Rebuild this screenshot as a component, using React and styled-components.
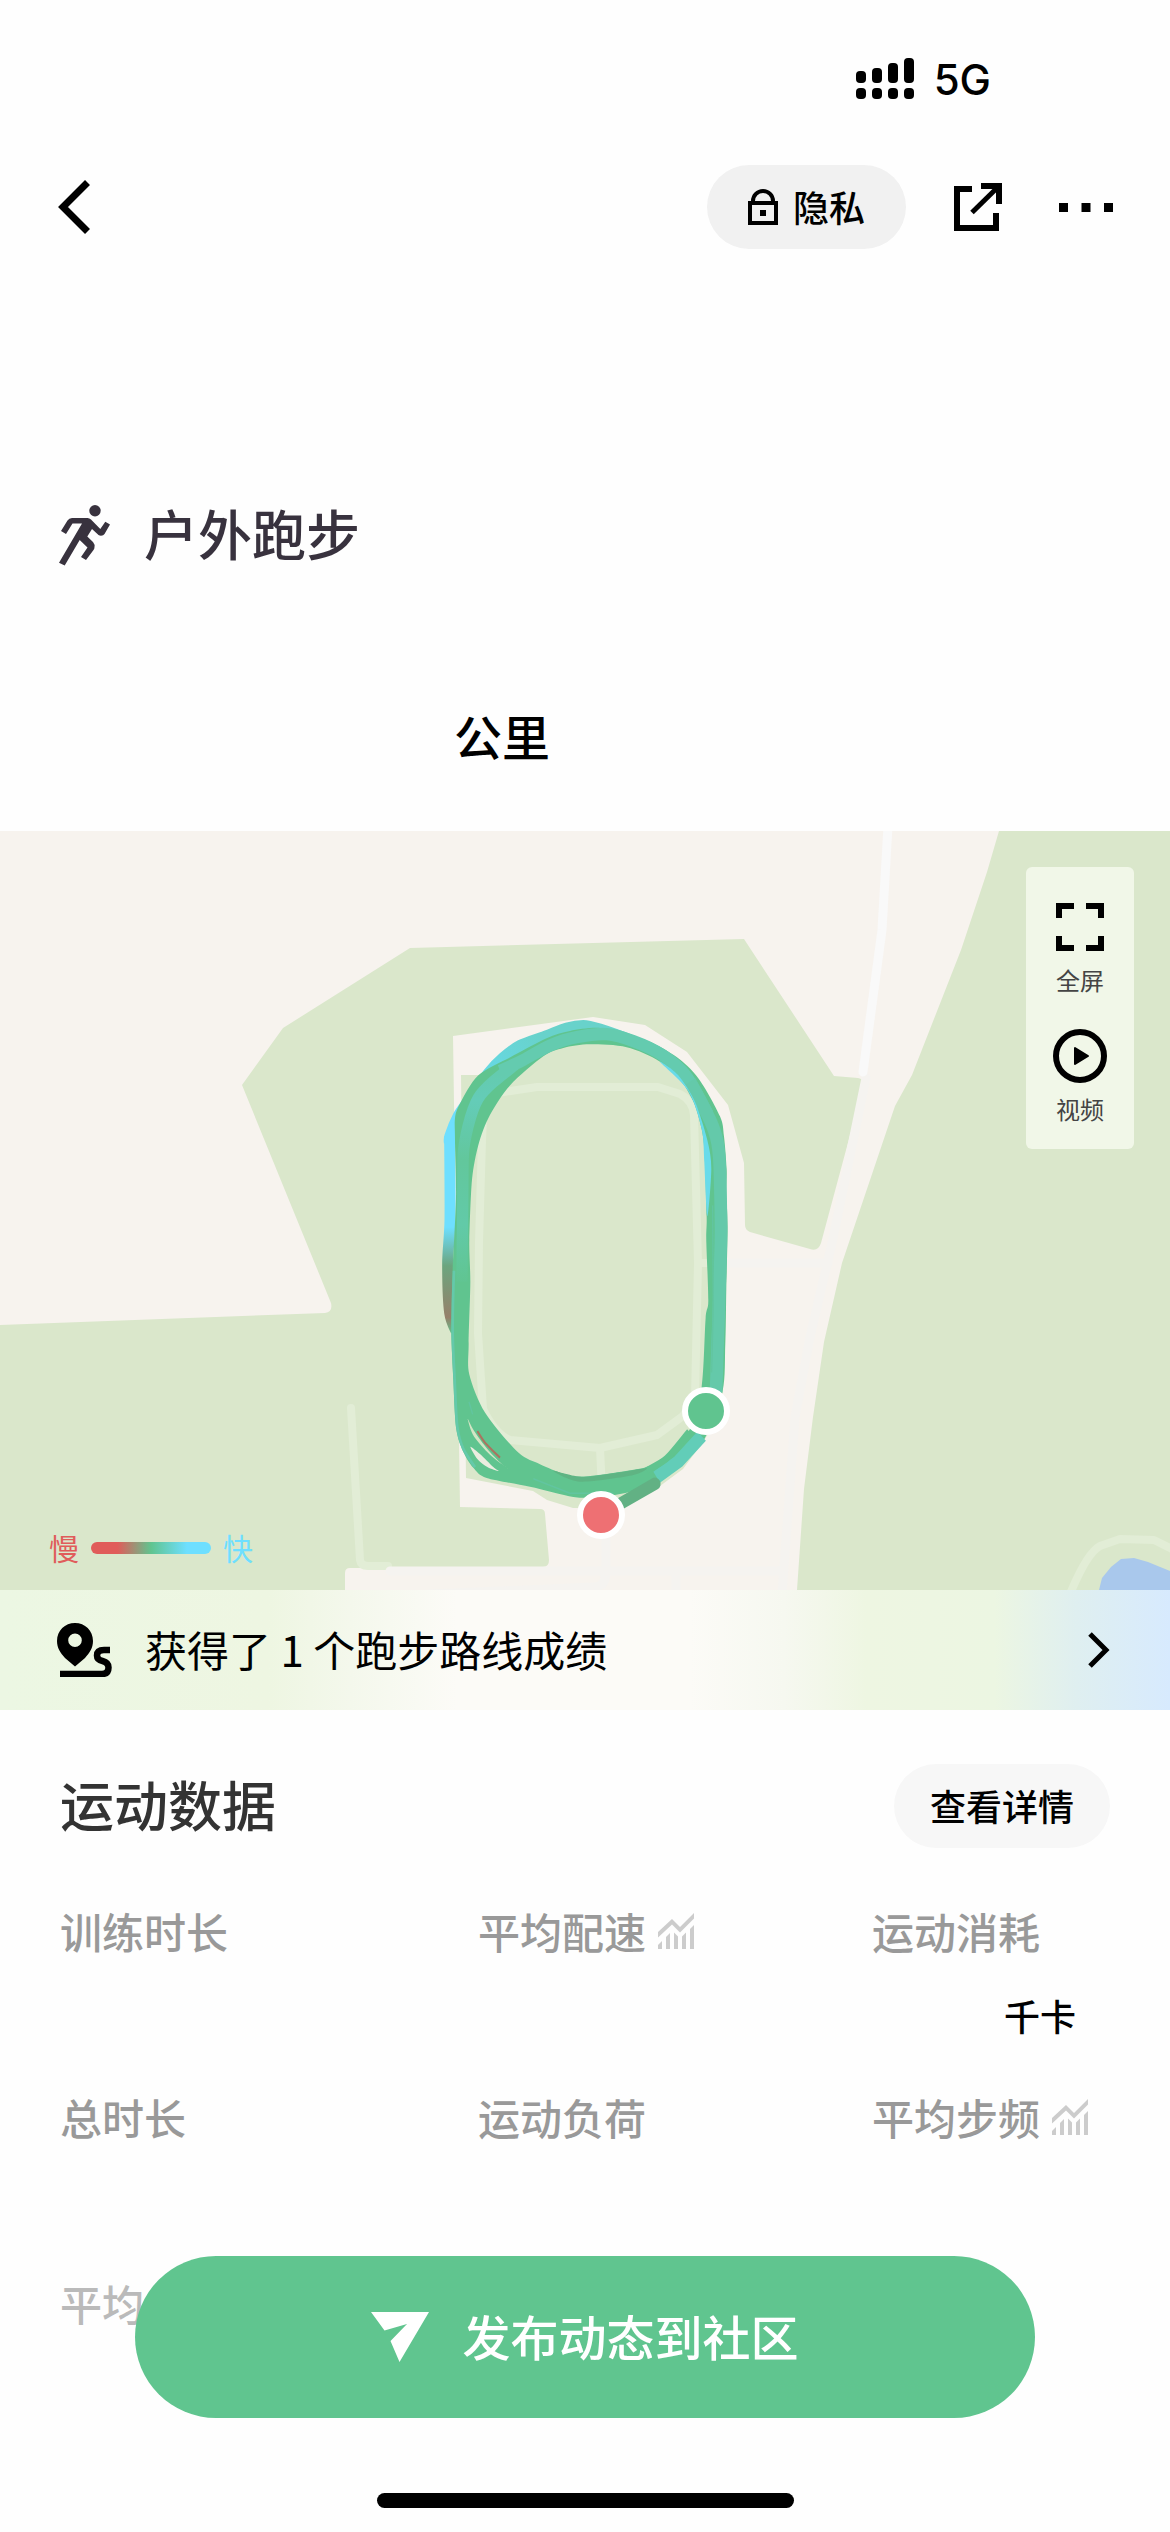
import React from "react";
import styled, { createGlobalStyle } from "styled-components";

const GlobalStyle = createGlobalStyle`
  *, *::before, *::after { box-sizing: border-box; }
  body {
    margin: 0;
    background: #fefefe;
    color: #000;
    font-family: Inter, "Noto Sans CJK SC", sans-serif;
  }
  button {
    border: 0;
    padding: 0;
    background: none;
    color: inherit;
    font: inherit;
    cursor: pointer;
  }
  h1, h2, p, dl, dt, dd { margin: 0; font-weight: inherit; }
  svg { display: block; flex: none; }
`;

const Page = styled.div`
  min-height: 100vh;
  font-family: "Noto Sans CJK SC", sans-serif;
`;

const StatusBar = styled.div`
  display: flex;
  justify-content: flex-end;
  align-items: center;
  gap: 20px;
  padding: 54px 179px 63px 60px;
  font: 500 42px/48px Inter, sans-serif;
`;

const Network = styled.span`
  padding-top: 4px;
  line-height: 44px;
`;

const Header = styled.header`
  display: flex;
  align-items: center;
  justify-content: space-between;
  height: 84px;
  padding: 0 57px;
`;

const HeaderActions = styled.div`
  display: flex;
  align-items: center;
`;

const IconButton = styled.button`
  display: flex;
  align-items: center;
  justify-content: center;
  height: 84px;
  margin-left: ${(p) => p.$gap || 0}px;
`;

const Pill = styled.button`
  display: flex;
  align-items: center;
  justify-content: center;
  gap: 15px;
  height: 84px;
  padding: 0 ${(p) => p.$pad}px;
  border-radius: 42px;
  background: ${(p) => p.$tone};
  font-size: 36px;
  line-height: 48px;
  font-weight: 500;
`;

const PillText = styled.span`
  padding-bottom: 2px;
`;

const Activity = styled.div`
  display: flex;
  align-items: center;
  gap: 33px;
  margin-top: 246px;
  padding: 0 59px;
  color: #38323e;
`;

const Title = styled.h2`
  padding-bottom: 4px;
  color: ${(p) => p.$tone};
  font-size: 54px;
  line-height: 76px;
  font-weight: 500;
`;

const Distance = styled.p`
  margin: 124px 0 60px;
  padding-left: 454px;
  font-size: 48px;
  line-height: 72px;
  font-weight: 500;
`;

const MapArea = styled.section`
  position: relative;
`;

const MapDrawing = styled.svg`
  width: 100%;
  height: auto;
`;

const MapTools = styled.div`
  position: absolute;
  top: 36px;
  right: 36px;
  display: flex;
  flex-direction: column;
  gap: 30px;
  width: 108px;
  padding: 33px 0 21px;
  border-radius: 6px;
  background: #f1f7e8;
`;

const MapTool = styled.button`
  display: flex;
  flex-direction: column;
  align-items: center;
  gap: 6px;
  color: #444;
  font-size: 24px;
  line-height: 39px;
`;

const Legend = styled.div`
  position: absolute;
  left: 49px;
  bottom: 20px;
  display: flex;
  align-items: center;
  gap: 12px;
  font-size: 30px;
  line-height: 42px;
`;

const LegendText = styled.span`
  padding-bottom: 2px;
  color: ${(p) => p.$tone};
`;

const LegendBar = styled.span`
  width: 120px;
  height: 12px;
  border-radius: 6px;
  background: linear-gradient(90deg, #e05c5a 22%, #60c48f 50%, #6edfff 80%);
`;

const RouteBanner = styled.button`
  display: flex;
  align-items: center;
  width: 100%;
  height: 120px;
  padding: 0 60px 0 57px;
  background: linear-gradient(
    90deg,
    #ecf7e3 0%,
    #eef6e2 23%,
    #f4f8ec 30%,
    #fcfbf7 39%,
    #fcfbf7 59%,
    #f6f8f0 67%,
    #eef6e2 74%,
    #ecf6e2 85%,
    #dfeff0 92%,
    #d7eafe 100%
  );
  font-size: 42px;
  line-height: 60px;
`;

const BannerText = styled.span`
  flex: 1;
  margin-left: 33px;
  padding-bottom: 2px;
  text-align: left;
`;

const DataSection = styled.section`
  padding: 54px 60px 180px;
`;

const DataHeader = styled.div`
  display: flex;
  align-items: center;
  justify-content: space-between;
`;

const Metrics = styled.dl`
  display: grid;
  grid-template-columns: 418fr 394fr 238fr;
  grid-auto-rows: 186px;
  margin-top: 53px;
`;

const Metric = styled.div`
  display: flex;
  flex-direction: column;
  gap: 30px;
`;

const MetricLabel = styled.dt`
  display: flex;
  align-items: center;
  gap: 12px;
  color: #999;
  font-size: 42px;
  line-height: 60px;
  font-weight: 500;
  white-space: nowrap;
`;

const MetricUnit = styled.dd`
  padding-left: 132px;
  font-size: 36px;
  line-height: 48px;
  font-weight: 500;
`;

const Dock = styled.div`
  position: fixed;
  left: 0;
  right: 0;
  bottom: 0;
  display: flex;
  flex-direction: column;
  align-items: center;
  gap: 75px;
  padding: 0 135px 24px;
  background: rgba(254, 254, 254, 0.33);
`;

const PublishButton = styled.button`
  display: flex;
  align-items: center;
  justify-content: center;
  gap: 33px;
  width: 100%;
  height: 162px;
  border-radius: 81px;
  background: #60c58f;
  color: #fff;
  font-size: 48px;
  line-height: 72px;
  font-weight: 500;
`;

const PublishText = styled.span`
  padding-bottom: 4px;
`;

const HomeIndicator = styled.div`
  width: 417px;
  height: 15px;
  border-radius: 8px;
  background: #000;
`;

const SignalIcon = () => (
  <svg width="58" height="41" viewBox="0 0 58 41" aria-hidden="true">
    {[13, 10, 5, 0].map((top, i) => (
      <g key={top}>
        <rect x={i * 16} y={top} width="10" height={25 - top} rx="4" />
        <rect x={i * 16} y="30" width="10" height="11" rx="4" />
      </g>
    ))}
  </svg>
);

const BackIcon = () => (
  <svg width="33" height="54" viewBox="0 0 33 54" fill="none" stroke="#000" strokeWidth="7">
    <path d="M30.500 2.500 6 27 30.500 51.500" />
  </svg>
);

const LockIcon = () => (
  <svg width="30" height="36" viewBox="0 0 30 36" fill="none" stroke="#000" strokeWidth="4">
    <rect x="2" y="14" width="26" height="20" />
    <path d="M5 13v-1a10 10 0 0 1 20 0v1" />
    <rect x="12" y="21" width="6" height="6" fill="#000" stroke="none" />
  </svg>
);

const ShareIcon = () => (
  <svg width="48" height="48" viewBox="0 0 48 48" fill="none" stroke="#000">
    <path strokeWidth="6" d="M18 6H3v39h39V30M27 3h18v18" />
    <path strokeWidth="5" d="M18 29.500 44 4" />
  </svg>
);

const MoreIcon = () => (
  <svg width="54" height="9" viewBox="0 0 54 9">
    <path d="M0 0h9v9H0zM22.500 0h9v9h-9zM45 0h9v9h-9z" />
  </svg>
);

const RunnerIcon = () => (
  <svg width="52" height="61" viewBox="0 0 52 61" fill="currentColor" aria-hidden="true">
    <circle cx="36" cy="5.700" r="5.700" />
    <path d="M2 26 8.500 15.500Q10 13 13 13H28.500Q30.500 13 32 14.500L41.300 24 46.300 16.800 51 19.500 45.500 29Q44.500 30.700 42 30.700Q40.500 30.700 39.500 30L33 24 28.300 31.500 34 37Q36 39.500 35.500 42Q35.500 44 34.500 45L27 55 22 52 28.500 42.500 20.700 35 5.700 60.600 0 57.700 23 18.500H13.500L7 29Z" />
  </svg>
);

const FullscreenIcon = () => (
  <svg width="54" height="54" viewBox="0 0 54 54" fill="none" stroke="#000" strokeWidth="6">
    <path d="M6 18V6h15M33 6h15v12M48 36v12H33M21 48H6V36" />
  </svg>
);

const PlayIcon = () => (
  <svg width="54" height="54" viewBox="0 0 54 54">
    <circle cx="27" cy="27" r="24" fill="none" stroke="#000" strokeWidth="6" />
    <path d="M22 19v16l13-8z" stroke="#000" strokeWidth="2" strokeLinejoin="round" />
  </svg>
);

const RouteIcon = () => (
  <svg width="55" height="54" viewBox="0 0 55 54" aria-hidden="true">
    <path
      fillRule="evenodd"
      d="M18 0C8 0 0 7.500 0 18c0 7 3.500 12 8 17l10 8.500 10-8.500c4.500-5 8-10 8-17C36 7.500 28 0 18 0Zm0 10.500a6.800 6.800 0 1 1 0 13.600 6.800 6.800 0 0 1 0-13.600Z"
    />
    <path
      d="M53 27H47Q40 27 40 32.500Q40 37 45.500 38Q51.500 39.500 51.500 44.500Q51.500 51 45 51H3"
      fill="none"
      stroke="#000"
      strokeWidth="6.500"
    />
  </svg>
);

const ChevronIcon = () => (
  <svg width="24" height="36" viewBox="0 0 24 36" fill="none" stroke="#000" strokeWidth="5">
    <path d="M4 2 20 18 4 34" />
  </svg>
);

const TrendIcon = () => (
  <svg width="36" height="36" viewBox="0 0 36 36" fill="#ccc" aria-hidden="true">
    <path d="M0 19 14 6l8 8L36 0v5.500L22 19.500l-8-8L0 24.500Z" />
    <path d="M0 32l4-4v8H0ZM8 24l4-4v16H8ZM16 19.500l4 4V36h-4ZM24 23.500l4-4V36h-4ZM32 16l4-4v24h-4Z" />
  </svg>
);

const SendIcon = () => (
  <svg width="58" height="50" viewBox="0 0 58 50" fill="#fff" aria-hidden="true">
    <path d="M0 0H58L28.500 50 19.500 29 36 12 13.500 18.500Z" />
  </svg>
);

/* Turns a flat list of x, y values into a smooth curve through every point */
function smooth(values, closed = false) {
  const pts = [];
  for (let i = 0; i < values.length; i += 2) pts.push([values[i], values[i + 1]]);
  const n = pts.length;
  const at = (i) => (closed ? pts[(i + n) % n] : pts[Math.min(Math.max(i, 0), n - 1)]);
  let d = `M${pts[0].join(" ")}`;
  for (let i = 0; i < (closed ? n : n - 1); i += 1) {
    const [a, b, c, e] = [at(i - 1), at(i), at(i + 1), at(i + 2)];
    const control = [b[0] + (c[0] - a[0]) / 7, b[1] + (c[1] - a[1]) / 7, c[0] - (e[0] - b[0]) / 7, c[1] - (e[1] - b[1]) / 7];
    d += `C${control.map(Math.round).join(" ")} ${c.join(" ")}`;
  }
  return closed ? `${d}Z` : d;
}

const outerEdge = smooth(
  [
    165, 380, 180, 340, 235, 262, 340, 208, 440, 160, 510, 140, 600, 132, 690, 155, 750, 170, 830, 212,
    895, 270, 960, 375, 972, 430, 980, 520, 979, 580, 983, 680, 979, 850, 976, 1000, 968, 1130, 915, 1260,
    840, 1338, 780, 1375, 690, 1408, 600, 1422, 520, 1422, 390, 1394, 260, 1370, 220, 1342, 186, 1290,
    168, 1230, 160, 1100, 154, 960, 158, 800, 168, 600, 165, 440,
  ],
  true
);

const innerEdge = smooth(
  [
    232, 465, 265, 380, 330, 290, 430, 210, 490, 187, 570, 177, 680, 185, 780, 225, 865, 305, 905, 410,
    915, 500, 920, 650, 919, 720, 925, 880, 917, 930, 905, 1120, 870, 1235, 800, 1308, 740, 1340, 640, 1356,
    545, 1366, 490, 1358, 420, 1332, 355, 1300, 255, 1190, 208, 1085, 206, 1000, 211, 830, 208, 715, 215, 560,
  ],
  true
);

const TrackMap = () => (
  <MapDrawing viewBox="0 831 1170 759" role="img" aria-label="跑步轨迹">
    <defs>
      <linearGradient id="pace" gradientUnits="userSpaceOnUse" x1="0" y1="680" x2="0" y2="975">
        <stop offset="0" stopColor="#6edfff" />
        <stop offset="0.36" stopColor="#6ba57e" />
        <stop offset="0.84" stopColor="#96806a" />
        <stop offset="1" stopColor="#60c48f" />
      </linearGradient>
      <linearGradient id="crown" gradientUnits="userSpaceOnUse" x1="160" y1="400" x2="420" y2="160">
        <stop offset="0" stopColor="#6edfff" />
        <stop offset="0.4" stopColor="#66dae8" />
        <stop offset="1" stopColor="#68d2cb" />
      </linearGradient>
      <linearGradient id="inner" gradientUnits="userSpaceOnUse" x1="0" y1="260" x2="0" y2="850">
        <stop offset="0" stopColor="#64cbaf" />
        <stop offset="0.12" stopColor="#64ccb8" />
        <stop offset="0.4" stopColor="#62c79c" />
        <stop offset="0.7" stopColor="#62caa8" />
        <stop offset="1" stopColor="#60c48f" />
      </linearGradient>
    </defs>

    <rect y="831" width="1170" height="759" fill="#f7f3ee" />
    <g fill="#dae7cb">
      <path d="M999 831 987 872 961 950 912 1075 895 1106 842 1263 824 1342 813 1417 804 1489 797 1590H1170V831Z" />
      <path d="M0 1325 325 1313Q333 1312 331 1303L242 1085 283 1028 410 948 744 939 834 1076 858 1078Q865 1079 863 1087L821 1243Q818 1252 810 1249L750 1232Q745 1230 745 1225L744 1163 728 1105 687 1052 645 1025 593 1017 453 1036 460 1507 540 1509Q545 1509 545 1514L549 1560Q549 1567 543 1567L350 1568Q345 1568 345 1573V1590H0Z" />
      <path d="M461 1075H480L520 1045 590 1032 650 1044 700 1090 720 1160 723 1410 703 1442 683 1469 660 1486 633 1503 600 1508 573 1508 547 1500 533 1491 466 1478Z" />
    </g>
    <path fill="#a9c8ec" d="M1099 1590 1102 1578 1111 1567 1121 1559 1134 1558 1148 1562 1170 1571V1590Z" />

    <g fill="none" strokeLinejoin="round" strokeLinecap="round">
      <g stroke="#e2edd6" strokeWidth="8">
        <path d="M497 1093 537 1087H658L680 1094Q693 1101 694 1115L698 1263 695 1398 683 1416 657 1435 600 1448 510 1440Q495 1434 483 1409L478 1333 479 1242 482 1140 483 1118Z" />
        <path d="M600 1448 602 1490M698 1263H722M351 1408 360 1560Q361 1566 368 1566H388" />
        <path d="M1070 1594Q1087 1553 1100 1546L1120 1539 1154 1540 1174 1550" />
      </g>
      <g stroke="#f5f3f0" strokeWidth="9">
        <path d="M866 1078 832 1243 810 1337 795 1417 782 1594M726 1263H828M390 1571H783M606 1540V1570Q606 1587 594 1587L430 1594M676 1571V1594" />
      </g>
      <path stroke="#f9f9f9" strokeWidth="9" d="M888 826 882 930 863 1072" />
    </g>

    {/* The recorded laps, drawn in their own finer grid */}
    <g transform="translate(400 980) scale(0.3333 0.3635)" fill="none" strokeLinejoin="round">
      <path stroke="url(#pace)" strokeWidth="33" d={smooth([168, 965, 149, 915, 143, 780, 150, 660, 149, 430])} />
      <path
        stroke="url(#crown)"
        strokeWidth="34"
        d={smooth([149, 450, 150, 430, 175, 375, 205, 335, 265, 258, 310, 215, 360, 182, 440, 155, 500, 134, 550, 127, 600, 137, 700, 170])}
      />
      <path fill="#60c48f" fillRule="evenodd" d={outerEdge + innerEdge} />
      <path
        stroke="#64cbaf"
        strokeWidth="34"
        d={smooth([300, 250, 370, 220, 450, 180, 530, 157, 620, 149, 700, 168, 790, 208, 860, 265, 925, 370])}
      />
      <path
        stroke="#64c9aa"
        strokeWidth="38"
        d={smooth([870, 280, 930, 385, 953, 450, 960, 530, 963, 690, 957, 900, 953, 1000, 948, 1135])}
      />
      <path
        stroke="url(#inner)"
        strokeWidth="34"
        d={smooth([345, 232, 280, 280, 235, 325, 205, 400, 190, 480, 188, 640, 186, 830])}
      />
      <path fill="#68dbea" d={smooth([780, 225, 865, 305, 905, 410, 913, 500, 922, 650, 934, 520, 922, 440, 885, 335, 835, 262], true)} />
      <path stroke="#64c9aa" strokeWidth="8" d={smooth([162, 800, 158, 960, 164, 1100, 172, 1230, 190, 1290, 225, 1340])} />
      <path stroke="#62cdb8" strokeWidth="36" d="M905 1255 835 1325 770 1368" />
      <path stroke="#60c48f" strokeWidth="18" d={smooth([868, 1242, 800, 1316, 740, 1349])} />
      <path fill="#5fb483" d={smooth([460, 1350, 545, 1367, 640, 1357, 740, 1343, 690, 1364, 540, 1380], true)} />
      <path stroke="#62c5a0" strokeWidth="4" d="M400 1372 510 1412 640 1412M207 1160 218 1195M938 620 940 900 935 1080" />
      <path fill="#ebede0" d={smooth([211, 1284, 240, 1304, 280, 1340, 296, 1351, 262, 1340, 232, 1318], true)} />
      <path fill="#d3e5c5" d={smooth([203, 1207, 222, 1240, 262, 1290, 300, 1327, 322, 1343, 270, 1306, 222, 1256], true)} />
      <path stroke="#a9745f" strokeWidth="6" d={smooth([232, 1241, 258, 1276, 300, 1314])} />
      <path stroke="#62b184" strokeWidth="34" strokeLinecap="round" d="M765 1386 655 1444" />
    </g>

    <g stroke="#fff" strokeWidth="6">
      <circle cx="706" cy="1411" r="21" fill="#60c48f" />
      <circle cx="601" cy="1515" r="21" fill="#ee7073" />
    </g>
  </MapDrawing>
);

const metrics = [
  { label: "训练时长" },
  { label: "平均配速", trend: true },
  { label: "运动消耗", unit: "千卡" },
  { label: "总时长" },
  { label: "运动负荷" },
  { label: "平均步频", trend: true },
  { label: "平均" },
];

export default function App() {
  return (
    <Page>
      <GlobalStyle />
      <StatusBar>
        <SignalIcon />
        <Network>5G</Network>
      </StatusBar>
      <Header>
        <IconButton aria-label="返回">
          <BackIcon />
        </IconButton>
        <HeaderActions>
          <Pill $pad={41} $tone="#f1f1f1">
            <LockIcon />
            <PillText>隐私</PillText>
          </Pill>
          <IconButton aria-label="分享" $gap={48}>
            <ShareIcon />
          </IconButton>
          <IconButton aria-label="更多" $gap={57}>
            <MoreIcon />
          </IconButton>
        </HeaderActions>
      </Header>
      <main>
        <Activity>
          <RunnerIcon />
          <Title as="h1" $tone="#38323e">户外跑步</Title>
        </Activity>
        <Distance>公里</Distance>
        <MapArea>
          <TrackMap />
          <MapTools>
            <MapTool>
              <FullscreenIcon />
              全屏
            </MapTool>
            <MapTool>
              <PlayIcon />
              视频
            </MapTool>
          </MapTools>
          <Legend>
            <LegendText $tone="#e05c5a">慢</LegendText>
            <LegendBar />
            <LegendText $tone="#6edfff">快</LegendText>
          </Legend>
        </MapArea>
        <RouteBanner>
          <RouteIcon />
          <BannerText>获得了 1 个跑步路线成绩</BannerText>
          <ChevronIcon />
        </RouteBanner>
        <DataSection>
          <DataHeader>
            <Title $tone="#333">运动数据</Title>
            <Pill $pad={36} $tone="#f7f7f7">
              <PillText>查看详情</PillText>
            </Pill>
          </DataHeader>
          <Metrics>
            {metrics.map((m) => (
              <Metric key={m.label}>
                <MetricLabel>
                  {m.label}
                  {m.trend && <TrendIcon />}
                </MetricLabel>
                {m.unit && <MetricUnit>{m.unit}</MetricUnit>}
              </Metric>
            ))}
          </Metrics>
        </DataSection>
      </main>
      <Dock>
        <PublishButton>
          <SendIcon />
          <PublishText>发布动态到社区</PublishText>
        </PublishButton>
        <HomeIndicator />
      </Dock>
    </Page>
  );
}
